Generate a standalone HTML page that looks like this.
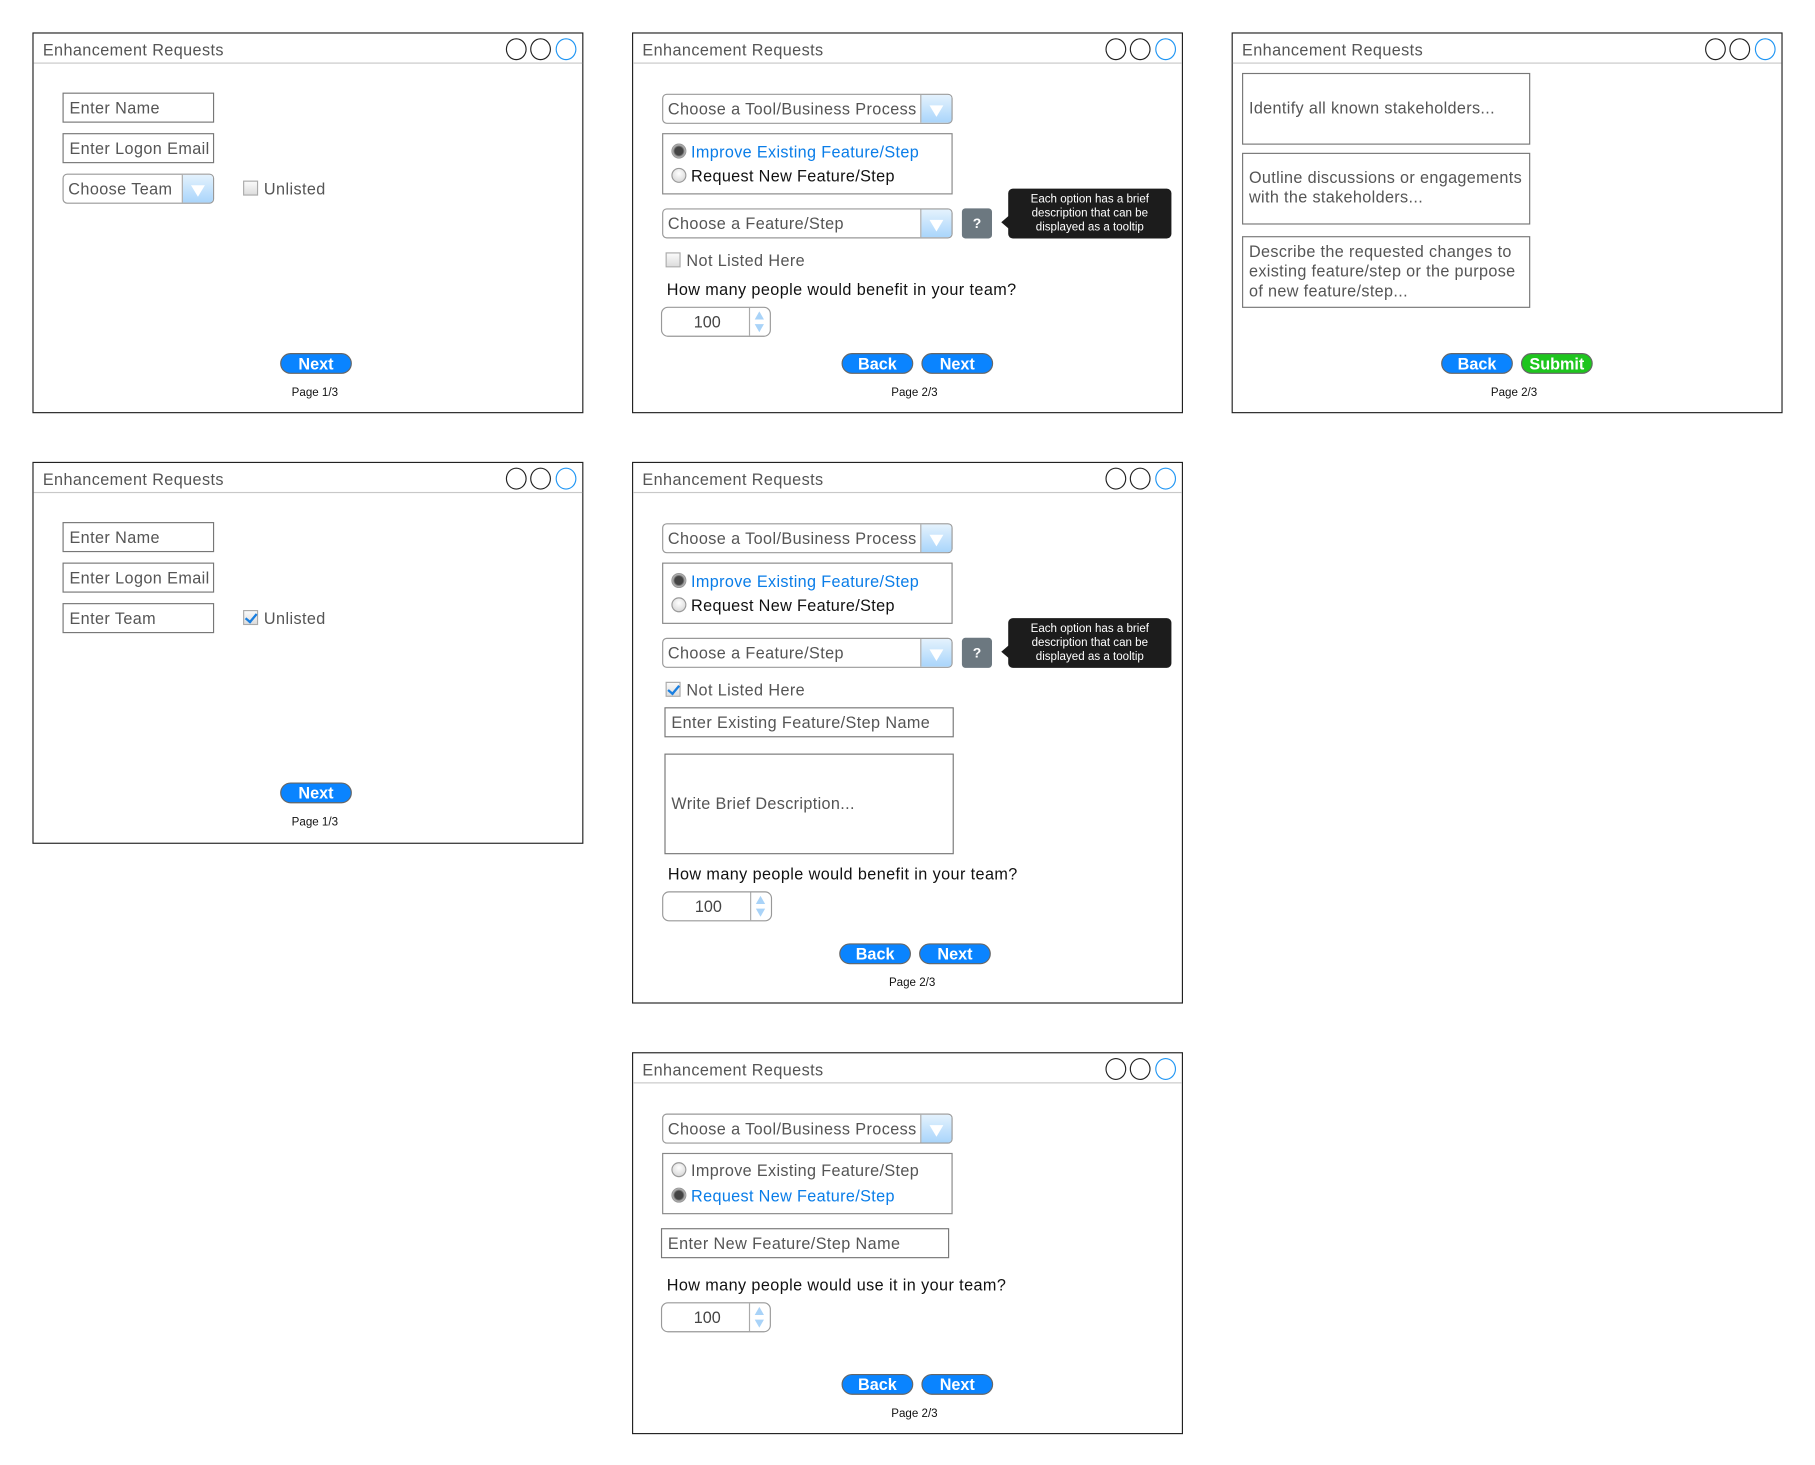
<!DOCTYPE html>
<html><head><meta charset="utf-8">
<style>
html,body{margin:0;padding:0;background:#fff;width:1815px;height:1465px;overflow:hidden}
#root{position:absolute;left:0;top:0;width:1568px;height:1266px;transform:scale(1.15753);transform-origin:0 0;font-family:"Liberation Sans",Arial,sans-serif}
.f{position:absolute;border:1px solid #222;background:#fff;box-sizing:border-box}
.f>*{position:absolute}
.tt{left:8px;top:6px;font-size:14px;color:#555;line-height:16px;white-space:nowrap;letter-spacing:0.35px}
.sep{left:0;right:0;top:25px;height:1px;background:#c8c8c8}
.c{top:4px;width:16px;height:17px;border:1.3px solid #222;border-radius:50%}
.c.b{border-color:#2196f3}
.in{border:1px solid #777;box-sizing:border-box;font-size:14px;color:#555;line-height:24px;padding-left:5px;white-space:nowrap;background:#fff;letter-spacing:0.35px}
.cb{border:1px solid #999;border-radius:4px;box-sizing:border-box;font-size:14px;color:#555;line-height:24px;padding-left:4px;white-space:nowrap;overflow:hidden;letter-spacing:0.35px}
.cb i{position:absolute;right:0;top:0;bottom:0;width:26px;border-left:1px solid #aaa;background:linear-gradient(#e4f2fd,#a9d5fb)}
.cb i:after{content:"";position:absolute;left:7px;top:9px;border-left:6px solid transparent;border-right:6px solid transparent;border-top:10px solid #fff}
.chk{width:13px;height:13px;border:1px solid #aaa;background:linear-gradient(#fafafa,#ddd);box-sizing:border-box}
.lbl{font-size:14px;color:#555;line-height:16px;white-space:nowrap;letter-spacing:0.35px}
.q{font-size:14px;color:#111;line-height:16px;white-space:nowrap;letter-spacing:0.35px}
.btn{height:18px;border-radius:9px;background:#0a84ff;border:1px solid #666;box-sizing:border-box;color:#fff;font-weight:bold;font-size:14px;line-height:16px;text-align:center;width:62px}
.btn.g{background:#1ec51e}
.pg{font-size:10px;color:#111;line-height:12px;width:80px;text-align:center;white-space:nowrap}
.rb{border:1px solid #888;box-sizing:border-box}
.rd{position:absolute;width:13px;height:13px;border-radius:50%;border:1px solid #999;background:radial-gradient(circle at 50% 35%,#fff,#d0d0d0);box-sizing:border-box}
.rd.on{background:radial-gradient(circle,#444 0 3.5px,#888 4.5px,#ddd 6px)}
.rt{position:absolute;left:24px;font-size:14px;line-height:16px;white-space:nowrap;letter-spacing:0.3px}
.help{width:26px;height:26px;border-radius:3px;background:#6c7880;color:#fff;font-size:12px;font-weight:bold;line-height:26px;text-align:center}
.tip{width:141px;height:43px;border-radius:4px;background:#1c1c1c;color:#fff;font-size:10px;line-height:12px;text-align:center;box-sizing:border-box;padding-top:4px}
.tip:before{content:"";position:absolute;left:-6px;top:23px;border-top:6px solid transparent;border-bottom:6px solid transparent;border-right:7px solid #1c1c1c}
.sp{width:95px;height:26px;border:1px solid #999;border-radius:6px;box-sizing:border-box;font-size:14px;color:#444;line-height:24px}
.sp span{position:absolute;left:0;width:78px;text-align:center}
.sp i{position:absolute;right:0;top:0;bottom:0;width:17px;border-left:1px solid #aaa}
.sp i:before{content:"";position:absolute;left:4px;top:3px;border-left:4.5px solid transparent;border-right:4.5px solid transparent;border-bottom:7px solid #a9d3f8}
.sp i:after{content:"";position:absolute;left:4px;top:14px;border-left:4.5px solid transparent;border-right:4.5px solid transparent;border-top:7px solid #a9d3f8}
.ta{border:1px solid #777;box-sizing:border-box;font-size:14px;color:#555;line-height:17px;padding:4px 5px;letter-spacing:0.3px}
.ck:after{content:"";position:absolute;left:3px;top:0px;width:4px;height:8px;border-right:2px solid #1a7fe0;border-bottom:2px solid #1a7fe0;transform:rotate(40deg)}
</style></head><body><div id="root">

<!-- Frame 1 -->
<div class="f" style="left:28px;top:28px;width:476px;height:329px">
<div class="tt">Enhancement Requests</div><div class="sep"></div>
<div class="c" style="left:408px"></div><div class="c" style="left:429px"></div><div class="c b" style="left:451px"></div>
<div class="in" style="left:25px;top:51px;width:131px;height:26px">Enter Name</div>
<div class="in" style="left:25px;top:86px;width:131px;height:26px">Enter Logon Email</div>
<div class="cb" style="left:25px;top:121px;width:131px;height:26px">Choose Team<i></i></div>
<div class="chk" style="left:181px;top:127px"></div>
<div class="lbl" style="left:199px;top:126px">Unlisted</div>
<div class="btn" style="left:213px;top:276px">Next</div>
<div class="pg" style="left:203px;top:305px">Page 1/3</div>
</div>

<!-- Frame 2 -->
<div class="f" style="left:546px;top:28px;width:476px;height:329px">
<div class="tt">Enhancement Requests</div><div class="sep"></div>
<div class="c" style="left:408px"></div><div class="c" style="left:429px"></div><div class="c b" style="left:451px"></div>
<div class="cb" style="left:25px;top:52px;width:251px;height:26px">Choose a Tool/Business Process<i></i></div>
<div class="rb" style="left:25px;top:86px;width:251px;height:53px">
 <div class="rd on" style="left:7px;top:8px"></div><div class="rt" style="top:7px;color:#0a7de8">Improve Existing Feature/Step</div>
 <div class="rd" style="left:7px;top:29px"></div><div class="rt" style="top:28px;color:#111">Request New Feature/Step</div>
</div>
<div class="cb" style="left:25px;top:151px;width:251px;height:26px">Choose a Feature/Step<i></i></div>
<div class="help" style="left:284px;top:151px">?</div>
<div class="tip" style="left:324px;top:134px">Each option has a brief<br>description that can be<br>displayed as a tooltip</div>
<div class="chk" style="left:28px;top:189px"></div>
<div class="lbl" style="left:46px;top:188px">Not Listed Here</div>
<div class="q" style="left:29px;top:213px">How many people would benefit in your team?</div>
<div class="sp" style="left:24px;top:236px"><span>100</span><i></i></div>
<div class="btn" style="left:180px;top:276px">Back</div>
<div class="btn" style="left:249px;top:276px">Next</div>
<div class="pg" style="left:203px;top:305px">Page 2/3</div>
</div>

<!-- Frame 3 -->
<div class="f" style="left:1064px;top:28px;width:476px;height:329px">
<div class="tt">Enhancement Requests</div><div class="sep"></div>
<div class="c" style="left:408px"></div><div class="c" style="left:429px"></div><div class="c b" style="left:451px"></div>
<div class="ta" style="left:8px;top:34px;width:249px;height:62px;padding-top:21px">Identify all known stakeholders...</div>
<div class="ta" style="left:8px;top:103px;width:249px;height:62px;padding-top:12px">Outline discussions or engagements with the stakeholders...</div>
<div class="ta" style="left:8px;top:175px;width:249px;height:62px;padding-top:4px">Describe the requested changes to existing feature/step or the purpose of new feature/step...</div>
<div class="btn" style="left:180px;top:276px">Back</div>
<div class="btn g" style="left:249px;top:276px">Submit</div>
<div class="pg" style="left:203px;top:305px">Page 2/3</div>
</div>

<!-- Frame 4 -->
<div class="f" style="left:28px;top:399px;width:476px;height:330px">
<div class="tt">Enhancement Requests</div><div class="sep"></div>
<div class="c" style="left:408px"></div><div class="c" style="left:429px"></div><div class="c b" style="left:451px"></div>
<div class="in" style="left:25px;top:51px;width:131px;height:26px">Enter Name</div>
<div class="in" style="left:25px;top:86px;width:131px;height:26px">Enter Logon Email</div>
<div class="in" style="left:25px;top:121px;width:131px;height:26px">Enter Team</div>
<div class="chk ck" style="left:181px;top:127px"></div>
<div class="lbl" style="left:199px;top:126px">Unlisted</div>
<div class="btn" style="left:213px;top:276px">Next</div>
<div class="pg" style="left:203px;top:305px">Page 1/3</div>
</div>

<!-- Frame 5 -->
<div class="f" style="left:546px;top:399px;width:476px;height:468px">
<div class="tt">Enhancement Requests</div><div class="sep"></div>
<div class="c" style="left:408px"></div><div class="c" style="left:429px"></div><div class="c b" style="left:451px"></div>
<div class="cb" style="left:25px;top:52px;width:251px;height:26px">Choose a Tool/Business Process<i></i></div>
<div class="rb" style="left:25px;top:86px;width:251px;height:53px">
 <div class="rd on" style="left:7px;top:8px"></div><div class="rt" style="top:7px;color:#0a7de8">Improve Existing Feature/Step</div>
 <div class="rd" style="left:7px;top:29px"></div><div class="rt" style="top:28px;color:#111">Request New Feature/Step</div>
</div>
<div class="cb" style="left:25px;top:151px;width:251px;height:26px">Choose a Feature/Step<i></i></div>
<div class="help" style="left:284px;top:151px">?</div>
<div class="tip" style="left:324px;top:134px">Each option has a brief<br>description that can be<br>displayed as a tooltip</div>
<div class="chk ck" style="left:28px;top:189px"></div>
<div class="lbl" style="left:46px;top:188px">Not Listed Here</div>
<div class="in" style="left:27px;top:211px;width:250px;height:26px">Enter Existing Feature/Step Name</div>
<div class="ta" style="left:27px;top:251px;width:250px;height:87px;padding-top:34px">Write Brief Description...</div>
<div class="q" style="left:30px;top:347px">How many people would benefit in your team?</div>
<div class="sp" style="left:25px;top:370px"><span>100</span><i></i></div>
<div class="btn" style="left:178px;top:415px">Back</div>
<div class="btn" style="left:247px;top:415px">Next</div>
<div class="pg" style="left:201px;top:444px">Page 2/3</div>
</div>

<!-- Frame 6 -->
<div class="f" style="left:546px;top:909px;width:476px;height:330px">
<div class="tt">Enhancement Requests</div><div class="sep"></div>
<div class="c" style="left:408px"></div><div class="c" style="left:429px"></div><div class="c b" style="left:451px"></div>
<div class="cb" style="left:25px;top:52px;width:251px;height:26px">Choose a Tool/Business Process<i></i></div>
<div class="rb" style="left:25px;top:86px;width:251px;height:53px">
 <div class="rd" style="left:7px;top:7px"></div><div class="rt" style="top:6px;color:#555">Improve Existing Feature/Step</div>
 <div class="rd on" style="left:7px;top:29px"></div><div class="rt" style="top:28px;color:#0a7de8">Request New Feature/Step</div>
</div>
<div class="in" style="left:24px;top:151px;width:249px;height:26px">Enter New Feature/Step Name</div>
<div class="q" style="left:29px;top:192px">How many people would use it in your team?</div>
<div class="sp" style="left:24px;top:215px"><span>100</span><i></i></div>
<div class="btn" style="left:180px;top:277px">Back</div>
<div class="btn" style="left:249px;top:277px">Next</div>
<div class="pg" style="left:203px;top:306px">Page 2/3</div>
</div>

</div></body></html>
